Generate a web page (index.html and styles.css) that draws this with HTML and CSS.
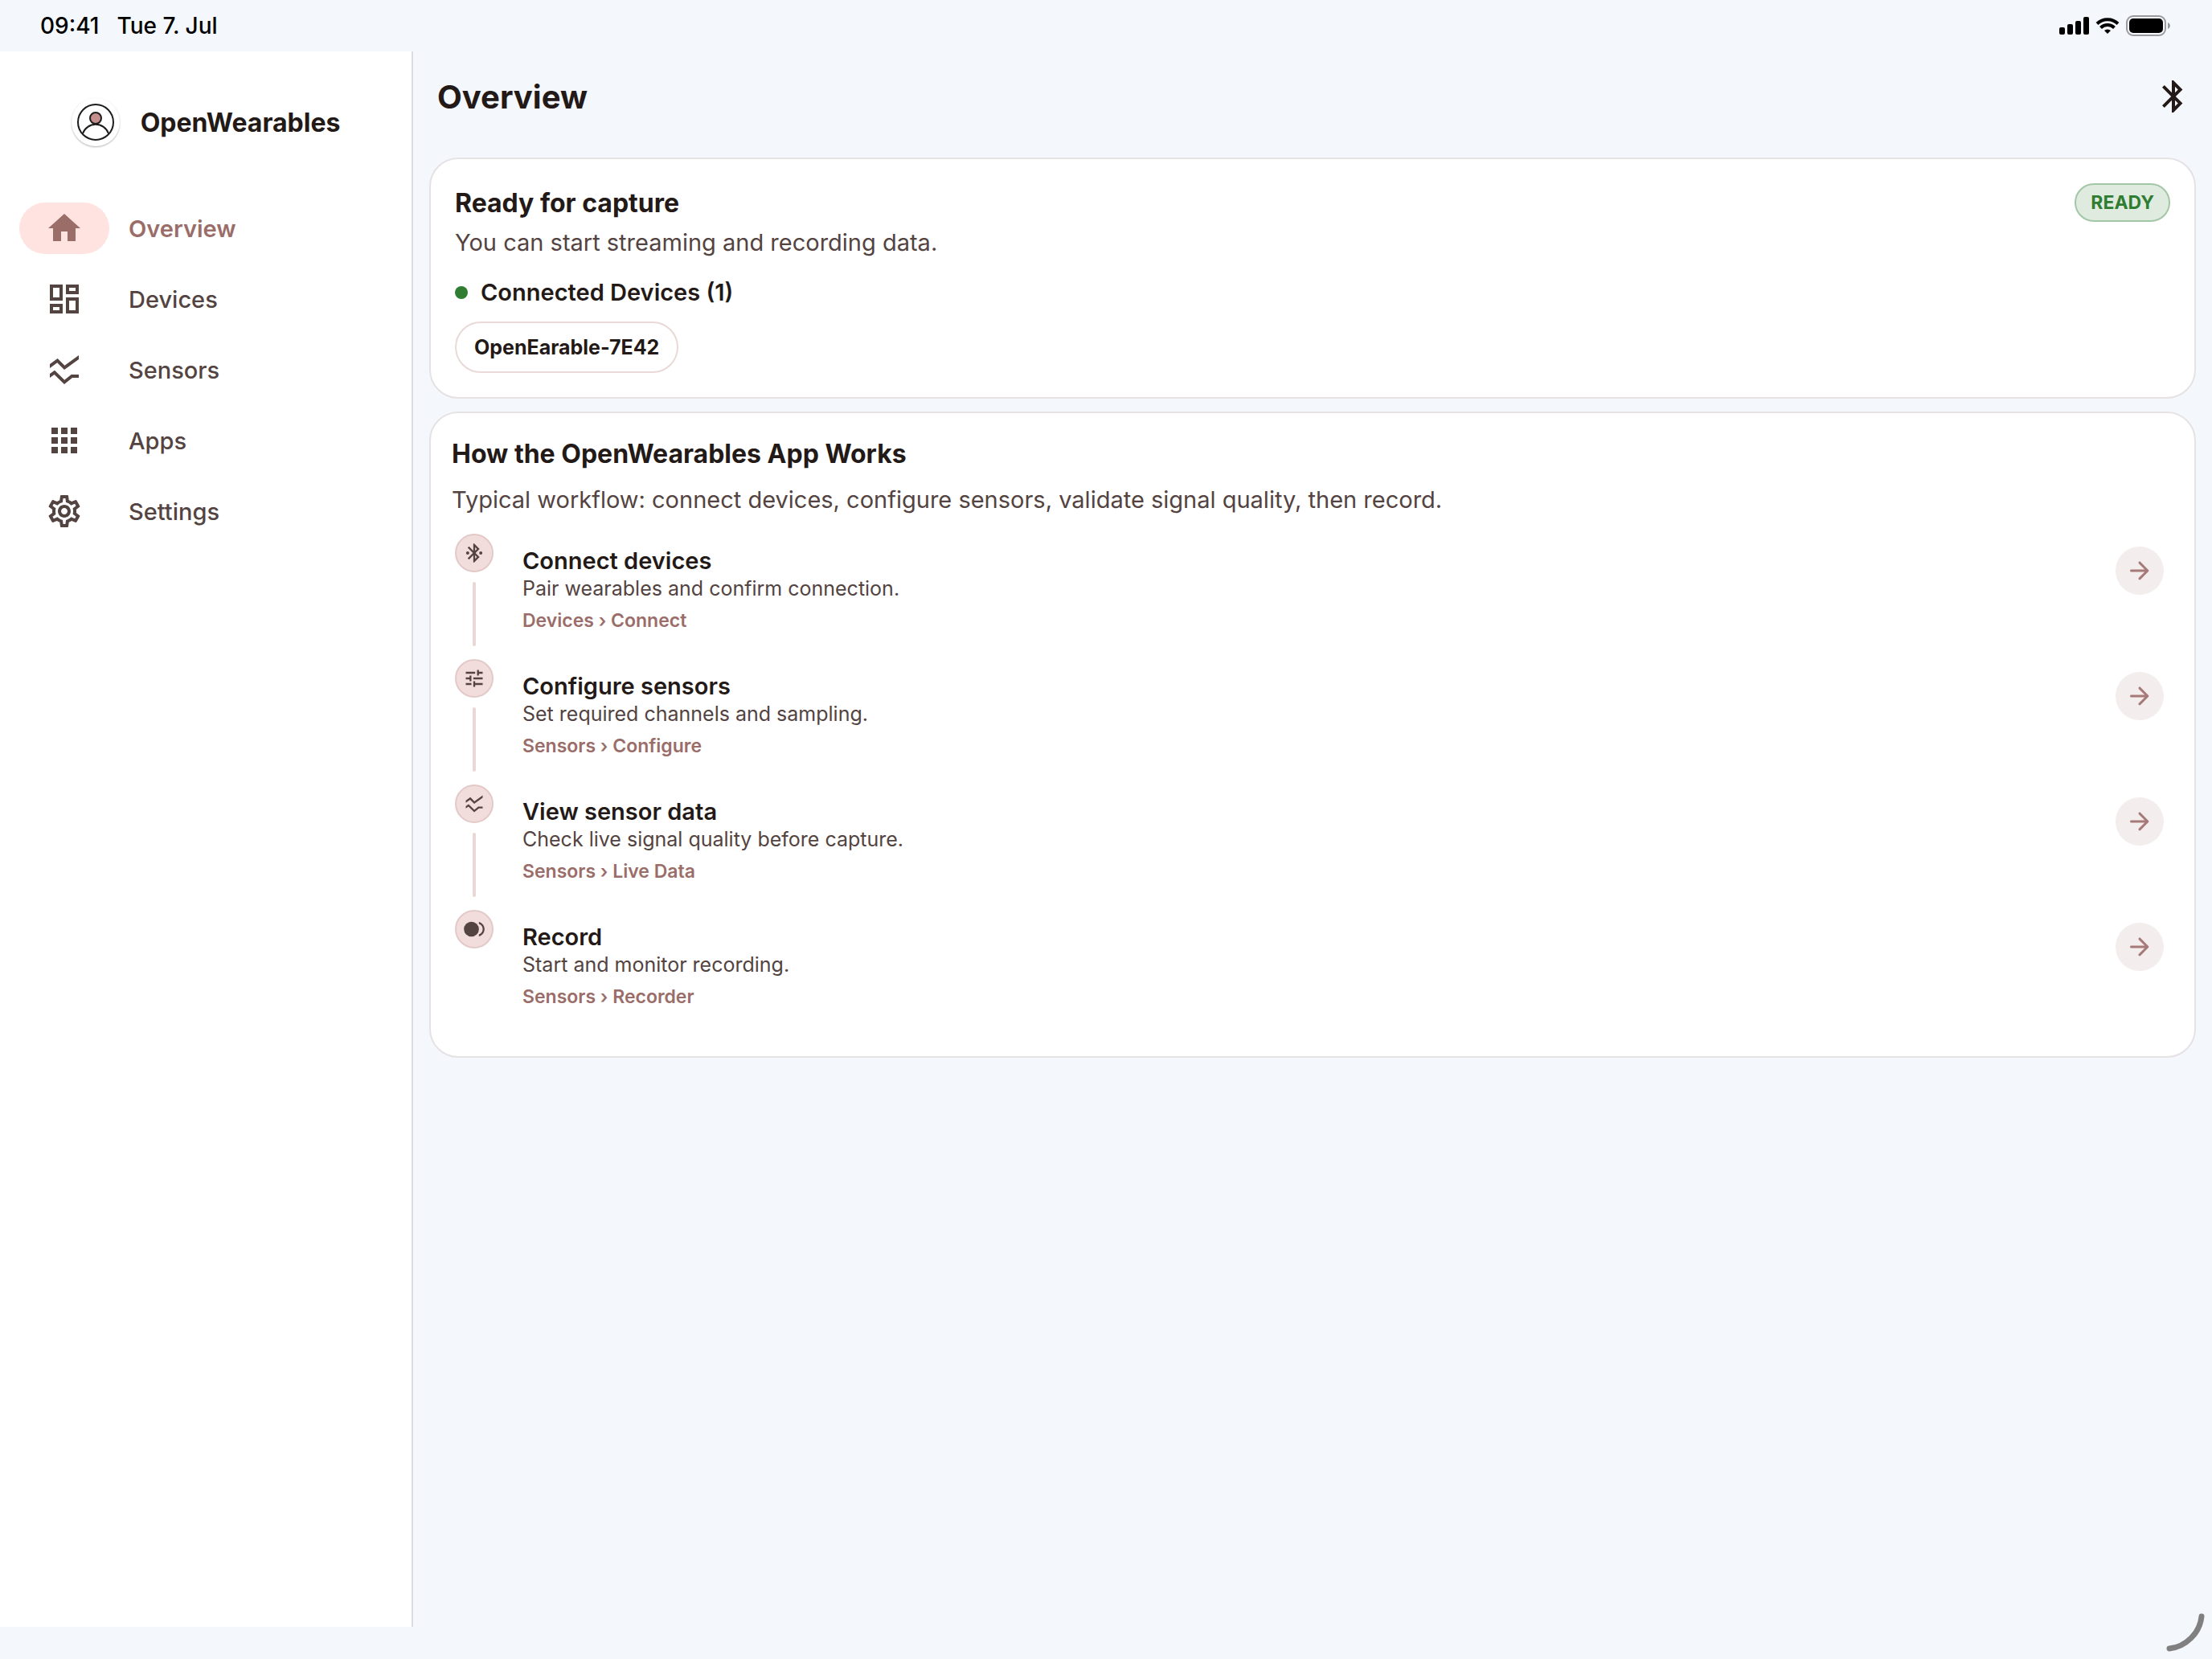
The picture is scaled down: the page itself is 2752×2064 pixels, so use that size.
FILE: index.html
```html
<!DOCTYPE html>
<html lang="en">

<head>
    <meta charset="UTF-8" />
    <meta name="viewport" content="width=device-width, initial-scale=1.0" />
    <title>OpenWearables</title>
    <link rel="stylesheet" href="styles.css">
</head>

<body>

    <!-- Shared icons -->
    <svg class="sprite" aria-hidden="true">
        <symbol id="icon-chart" viewBox="0 0 24 24">
            <path d="M21 5.47 12 12 7.62 7.62 3 11V8.52L7.83 5l4.38 4.38L21 3v2.47zM21 15h-4.7l-4.17 3.34L6 12.41l-3 2.13V17l2.8-2 6.2 6 5-4h4v-2z" />
        </symbol>
        <symbol id="icon-arrow" viewBox="0 0 24 24">
            <path d="M5 13h11.17l-4.88 4.88c-.39.39-.39 1.03 0 1.42.39.39 1.02.39 1.41 0l6.59-6.59c.39-.39.39-1.02 0-1.41l-6.58-6.6c-.39-.39-1.02-.39-1.41 0-.39.39-.39 1.02 0 1.41L16.17 11H5c-.55 0-1 .45-1 1s.45 1 1 1z" />
        </symbol>
    </svg>

    <div class="status-bar">
        <div class="status-time">
            <span>09:41</span>
            <span>Tue 7. Jul</span>
        </div>
        <svg class="status-icons" viewBox="0 -1 140 28" aria-hidden="true">
            <rect x="0" y="15" width="7" height="9" rx="2" />
            <rect x="10" y="11" width="7" height="13" rx="2" />
            <rect x="20" y="7" width="7" height="17" rx="2" />
            <rect x="30" y="2" width="7" height="22" rx="2" />
            <g class="line">
                <path d="M47 10.5a18.5 18.5 0 0 1 26 0" />
                <path d="M51.5 15.5a12 12 0 0 1 17 0" />
            </g>
            <path d="M60 23l-4-4a6 6 0 0 1 8 0z" />
            <rect class="battery" x="84" y="1" width="48" height="24" rx="8" />
            <rect x="87" y="4" width="42" height="18" rx="5" />
            <path class="nub" d="M135 9c4 2 4 6 0 8z" />
        </svg>
    </div>

    <div class="layout">
        <aside class="sidebar">
            <div class="brand">
                <span class="brand-logo">
                    <svg viewBox="0 0 60 60" aria-hidden="true">
                        <circle cx="30" cy="30" r="22" />
                        <path d="M14 44a17 17 0 0 1 32 0" />
                        <circle class="head" cx="30" cy="25" r="7" />
                    </svg>
                </span>
                <span class="brand-name">OpenWearables</span>
            </div>

            <nav class="nav">
                <a class="nav-item active" href="#">
                    <span class="nav-icon">
                        <svg viewBox="0 0 24 24" aria-hidden="true">
                            <path d="M10 20v-6h4v6h5v-8h3L12 3 2 12h3v8z" />
                        </svg>
                    </span>
                    Overview
                </a>
                <a class="nav-item" href="#">
                    <span class="nav-icon">
                        <svg viewBox="0 0 24 24" aria-hidden="true">
                            <path d="M19 5v2h-4V5h4M9 5v6H5V5h4m10 8v6h-4v-6h4M9 17v2H5v-2h4M21 3h-8v6h8V3zM11 3H3v10h8V3zm10 8h-8v10h8V11zm-10 4H3v6h8v-6z" />
                        </svg>
                    </span>
                    Devices
                </a>
                <a class="nav-item" href="#">
                    <span class="nav-icon">
                        <svg aria-hidden="true"><use href="#icon-chart" /></svg>
                    </span>
                    Sensors
                </a>
                <a class="nav-item" href="#">
                    <span class="nav-icon">
                        <svg viewBox="0 0 24 24" aria-hidden="true">
                            <path d="M4 8h4V4H4v4zm6 12h4v-4h-4v4zm-6 0h4v-4H4v4zm0-6h4v-4H4v4zm6 0h4v-4h-4v4zm6-10v4h4V4h-4zm-6 4h4V4h-4v4zm6 6h4v-4h-4v4zm0 6h4v-4h-4v4z" />
                        </svg>
                    </span>
                    Apps
                </a>
                <a class="nav-item" href="#">
                    <span class="nav-icon">
                        <svg viewBox="0 0 24 24" aria-hidden="true">
                            <path d="M19.43 12.98c.04-.32.07-.64.07-.98 0-.34-.03-.66-.07-.98l2.11-1.65c.19-.15.24-.42.12-.64l-2-3.46c-.09-.16-.26-.25-.44-.25-.06 0-.12.01-.17.03l-2.49 1c-.52-.4-1.08-.73-1.69-.98l-.38-2.65C14.46 2.18 14.25 2 14 2h-4c-.25 0-.46.18-.49.42l-.38 2.65c-.61.25-1.17.59-1.69.98l-2.49-1c-.06-.02-.12-.03-.18-.03-.17 0-.34.09-.43.25l-2 3.46c-.13.22-.07.49.12.64l2.11 1.65c-.04.32-.07.65-.07.98 0 .33.03.66.07.98l-2.11 1.65c-.19.15-.24.42-.12.64l2 3.46c.09.16.26.25.44.25.06 0 .12-.01.17-.03l2.49-1c.52.4 1.08.73 1.69.98l.38 2.65c.03.24.24.42.49.42h4c.25 0 .46-.18.49-.42l.38-2.65c.61-.25 1.17-.59 1.69-.98l2.49 1c.06.02.12.03.18.03.17 0 .34-.09.43-.25l2-3.46c.12-.22.07-.49-.12-.64l-2.11-1.65zm-1.98-1.71c.04.31.05.52.05.73 0 .21-.02.43-.05.73l-.14 1.13.89.7 1.08.84-.7 1.21-1.27-.51-1.04-.42-.9.68c-.43.32-.84.56-1.25.73l-1.06.43-.16 1.13-.2 1.35h-1.4l-.19-1.35-.16-1.13-1.06-.43c-.43-.18-.83-.41-1.23-.71l-.91-.7-1.06.43-1.27.51-.7-1.21 1.08-.84.89-.7-.14-1.13c-.03-.31-.05-.54-.05-.74s.02-.43.05-.73l.14-1.13-.89-.7-1.08-.84.7-1.21 1.27.51 1.04.42.9-.68c.43-.32.84-.56 1.25-.73l1.06-.43.16-1.13.2-1.35h1.39l.19 1.35.16 1.13 1.06.43c.43.18.83.41 1.23.71l.91.7 1.06-.43 1.27-.51.7 1.21-1.07.85-.89.7.14 1.13zM12 8c-2.21 0-4 1.79-4 4s1.79 4 4 4 4-1.79 4-4-1.79-4-4-4zm0 6c-1.1 0-2-.9-2-2s.9-2 2-2 2 .9 2 2-.9 2-2 2z" />
                        </svg>
                    </span>
                    Settings
                </a>
            </nav>
        </aside>

        <main class="main">
            <header class="topbar">
                <h1>Overview</h1>
                <button class="icon-btn" type="button" aria-label="Bluetooth">
                    <svg viewBox="0 0 24 24" aria-hidden="true">
                        <path d="M17.71 7.71 12 2h-1v7.59L6.41 5 5 6.41 10.59 12 5 17.59 6.41 19 11 14.41V22h1l5.71-5.71-4.3-4.29 4.3-4.29zM13 5.83l1.88 1.88L13 9.59V5.83zm1.88 10.46L13 18.17v-3.76l1.88 1.88z" />
                    </svg>
                </button>
            </header>

            <section class="card status-card">
                <div class="card-head">
                    <h2>Ready for capture</h2>
                    <span class="badge">READY</span>
                </div>
                <p class="card-text">You can start streaming and recording data.</p>
                <h3 class="connected">Connected Devices (1)</h3>
                <button class="chip" type="button">OpenEarable-7E42</button>
            </section>

            <section class="card works-card">
                <h2>How the OpenWearables App Works</h2>
                <p class="card-text">Typical workflow: connect devices, configure sensors, validate signal quality, then record.</p>

                <ol class="steps">
                    <li class="step">
                        <div class="step-marker">
                            <span class="step-icon">
                                <svg viewBox="0 0 24 24" aria-hidden="true">
                                    <path d="M17.71 7.71 12 2h-1v7.59L6.41 5 5 6.41 10.59 12 5 17.59 6.41 19 11 14.41V22h1l5.71-5.71-4.3-4.29 4.3-4.29zM13 5.83l1.88 1.88L13 9.59V5.83zm1.88 10.46L13 18.17v-3.76l1.88 1.88z" />
                                    <circle cx="5" cy="12" r="1.7" />
                                    <circle cx="19" cy="12" r="1.7" />
                                </svg>
                            </span>
                        </div>
                        <div class="step-body">
                            <h3>Connect devices</h3>
                            <p>Pair wearables and confirm connection.</p>
                            <div class="step-path">Devices › Connect</div>
                        </div>
                        <button class="step-go" type="button" aria-label="Connect devices">
                            <svg aria-hidden="true"><use href="#icon-arrow" /></svg>
                        </button>
                    </li>
                    <li class="step">
                        <div class="step-marker">
                            <span class="step-icon">
                                <svg viewBox="0 0 24 24" aria-hidden="true">
                                    <path d="M3 17v2h6v-2H3zM3 5v2h10V5H3zm10 16v-2h8v-2h-8v-2h-2v6h2zM7 9v2H3v2h4v2h2V9H7zm14 4v-2H11v2h10zm-6-4h2V7h4V5h-4V3h-2v6z" />
                                </svg>
                            </span>
                        </div>
                        <div class="step-body">
                            <h3>Configure sensors</h3>
                            <p>Set required channels and sampling.</p>
                            <div class="step-path">Sensors › Configure</div>
                        </div>
                        <button class="step-go" type="button" aria-label="Configure sensors">
                            <svg aria-hidden="true"><use href="#icon-arrow" /></svg>
                        </button>
                    </li>
                    <li class="step">
                        <div class="step-marker">
                            <span class="step-icon">
                                <svg aria-hidden="true"><use href="#icon-chart" /></svg>
                            </span>
                        </div>
                        <div class="step-body">
                            <h3>View sensor data</h3>
                            <p>Check live signal quality before capture.</p>
                            <div class="step-path">Sensors › Live Data</div>
                        </div>
                        <button class="step-go" type="button" aria-label="View sensor data">
                            <svg aria-hidden="true"><use href="#icon-arrow" /></svg>
                        </button>
                    </li>
                    <li class="step">
                        <div class="step-marker">
                            <span class="step-icon">
                                <svg viewBox="0 0 24 24" aria-hidden="true">
                                    <circle cx="9" cy="12" r="8" />
                                    <path d="M17 4.26v2.09a5.99 5.99 0 0 1 0 11.3v2.09c3.45-.89 6-4.01 6-7.74s-2.55-6.85-6-7.74z" />
                                </svg>
                            </span>
                        </div>
                        <div class="step-body">
                            <h3>Record</h3>
                            <p>Start and monitor recording.</p>
                            <div class="step-path">Sensors › Recorder</div>
                        </div>
                        <button class="step-go" type="button" aria-label="Record">
                            <svg aria-hidden="true"><use href="#icon-arrow" /></svg>
                        </button>
                    </li>
                </ol>
            </section>
        </main>
    </div>

    <svg class="corner" viewBox="0 0 60 60" aria-hidden="true">
        <path d="M47 7C45 28 27 45 7 47" />
    </svg>

</body>

</html>
```

FILE: styles.css
```css
* {
    box-sizing: border-box;
}

body {
    display: flex;
    flex-direction: column;
    min-height: 100vh;
    margin: 0;
    font-family: Inter, "Liberation Sans", sans-serif;
    font-size: 29px;
    color: #231917;
    background: #f4f7fc;
}

h1,
h2,
h3,
p {
    margin: 0;
}

svg {
    display: block;
    fill: currentColor;
}

button {
    font: inherit;
    color: inherit;
    cursor: pointer;
}

.sprite {
    display: none;
}

/* Status bar */
.status-bar {
    display: flex;
    align-items: center;
    justify-content: space-between;
    height: 64px;
    padding: 0 50px;
    color: #000;
}

.status-time {
    display: flex;
    gap: 22px;
    font-size: 28px;
    font-weight: 500;
}

.status-icons {
    width: 140px;
    height: 28px;
}

.status-icons .line {
    fill: none;
    stroke: #000;
    stroke-width: 4;
}

.status-icons .battery {
    fill: none;
    stroke: #999b9e;
    stroke-width: 2;
}

.status-icons .nub {
    fill: #999b9e;
}

.layout {
    display: flex;
    flex: 1;
}

/* Sidebar */
.sidebar {
    flex: 0 0 514px;
    margin-bottom: 40px;
    padding: 56px 24px;
    background: #fff;
    border-right: 2px solid #dcdbdf;
}

.brand {
    display: flex;
    align-items: center;
    justify-content: center;
    gap: 26px;
    height: 64px;
    margin-bottom: 68px;
}

.brand-logo {
    width: 60px;
    height: 60px;
    border-radius: 50%;
    box-shadow: 0 1px 2px rgba(0, 0, 0, 0.3);
}

.brand-logo svg {
    fill: none;
    stroke: #1d1d1b;
    stroke-width: 2;
}

.brand-logo .head {
    fill: #c48f8d;
}

.brand-name {
    font-size: 32px;
    font-weight: 700;
}

.nav {
    display: flex;
    flex-direction: column;
    gap: 24px;
}

.nav-item {
    display: flex;
    align-items: center;
    gap: 24px;
    font-weight: 500;
    color: #534341;
    text-decoration: none;
}

.nav-icon {
    display: flex;
    align-items: center;
    justify-content: center;
    width: 112px;
    height: 64px;
    border-radius: 32px;
}

.nav-icon svg {
    width: 48px;
    height: 48px;
}

.nav-item.active {
    font-weight: 600;
    color: #9a6d69;
}

.nav-item.active .nav-icon {
    background: #ffe3e0;
}

/* Main */
.main {
    flex: 1;
    min-width: 0;
}

.topbar {
    display: flex;
    align-items: center;
    justify-content: space-between;
    height: 112px;
    padding: 0 24px 0 30px;
}

.topbar h1 {
    font-size: 40px;
    font-weight: 700;
}

.icon-btn {
    padding: 0;
    background: none;
    border: none;
}

.icon-btn svg {
    width: 48px;
    height: 48px;
}

.card {
    margin: 20px 20px 16px;
    background: #fff;
    border: 2px solid #e6e2e4;
    border-radius: 36px;
}

.card + .card {
    margin-top: 0;
}

.card h2 {
    font-size: 32px;
    font-weight: 700;
    line-height: 50px;
}

.card h3 {
    font-size: 29px;
    font-weight: 600;
}

.card-text {
    line-height: 40px;
    color: #534341;
}

.status-card {
    padding: 30px;
}

.card-head {
    display: flex;
    align-items: flex-start;
    justify-content: space-between;
    margin-bottom: 4px;
}

.badge {
    padding: 0 18px;
    font-size: 23px;
    font-weight: 700;
    line-height: 44px;
    color: #2e7d32;
    background: #e0ebe0;
    border: 2px solid #a3c7a5;
    border-radius: 24px;
}

.connected {
    display: flex;
    align-items: center;
    gap: 16px;
    margin: 22px 0 16px;
    line-height: 40px;
}

.connected::before {
    content: "";
    width: 16px;
    height: 16px;
    border-radius: 50%;
    background: #2e7d32;
}

.chip {
    display: block;
    height: 64px;
    padding: 0 22px;
    font-size: 25px;
    font-weight: 700;
    background: #fff;
    border: 2px solid #e9d9d7;
    border-radius: 32px;
}

/* Steps */
.works-card {
    padding: 26px;
}

.works-card h2 {
    margin-bottom: 12px;
}

.steps {
    margin: 22px 0 0;
    padding: 0 12px 0 4px;
    list-style: none;
}

.step {
    display: flex;
    height: 156px;
}

.step-marker {
    display: flex;
    flex-direction: column;
    align-items: center;
    margin-right: 36px;
}

.step-icon {
    display: flex;
    align-items: center;
    justify-content: center;
    width: 48px;
    height: 48px;
    color: #534341;
    background: #f1dddc;
    border: 2px solid #e3cac8;
    border-radius: 50%;
}

.step-icon svg {
    width: 28px;
    height: 28px;
}

.step:not(:last-child) .step-marker::after {
    content: "";
    flex: 1;
    width: 4px;
    margin: 12px 0 16px;
    border-radius: 2px;
    background: #e8d8d6;
}

.step-body {
    flex: 1;
    padding-top: 18px;
    line-height: 32px;
}

.step-body p {
    margin-top: 2px;
    font-size: 25px;
    color: #534341;
}

.step-path {
    margin-top: 8px;
    font-size: 23px;
    font-weight: 600;
    color: #9a6d69;
}

.step-go {
    display: flex;
    align-items: center;
    justify-content: center;
    width: 60px;
    height: 60px;
    margin-top: 16px;
    padding: 0;
    color: #a67b77;
    background: #f3eded;
    border: none;
    border-radius: 50%;
}

.step-go svg {
    width: 36px;
    height: 36px;
}

/* Corner resize handle */
.corner {
    position: absolute;
    right: 0;
    bottom: 0;
    width: 60px;
    height: 60px;
    fill: none;
    stroke: #808080;
    stroke-width: 7;
    stroke-linecap: round;
}
```
